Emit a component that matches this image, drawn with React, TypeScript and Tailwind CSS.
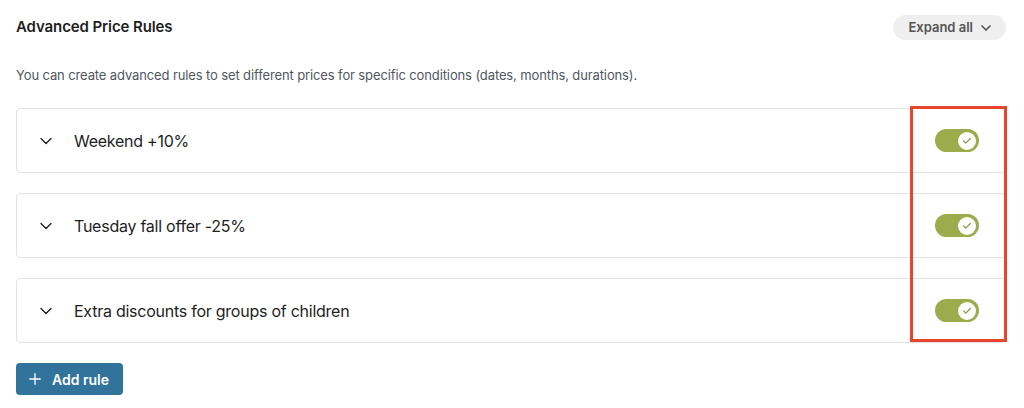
import { ChevronDown, Plus, Check } from "lucide-react";

const rules = [
  "Weekend +10%",
  "Tuesday fall offer -25%",
  "Extra discounts for groups of children",
];

function Toggle() {
  return (
    <div className="w-[44px] h-[23px] rounded-full bg-[#9cab4b] flex items-center justify-end pr-[3px]">
      <div className="w-[18px] h-[18px] rounded-full bg-white flex items-center justify-center">
        <Check size={10} strokeWidth={3} className="text-[#8a9a3c]" />
      </div>
    </div>
  );
}

export default function App() {
  return (
    <div className="w-[1024px] h-[408px] bg-white px-4 pt-[15px] font-['Inter',sans-serif] overflow-hidden">
      <div className="w-[990px]">
        {/* Header */}
        <div className="flex items-center justify-between h-[25px]">
          <h2 className="text-[15px] font-semibold text-[#1e1e1e] tracking-[-0.1px]">
            Advanced Price Rules
          </h2>
          <button className="h-[25px] pl-[15px] pr-[12px] rounded-full bg-[#efefef] text-[#555] text-[13px] font-semibold flex items-center gap-[5px]">
            Expand all
            <ChevronDown size={16} strokeWidth={2.5} />
          </button>
        </div>

        <p className="mt-[26px] text-[13px] text-[#50575e] leading-[18px] tracking-[-0.12px]">
          You can create advanced rules to set different prices for specific conditions (dates, months, durations).
        </p>

        {/* Rules */}
        <div className="relative mt-[24px] flex flex-col gap-[20px]">
          {rules.map((r) => (
            <div
              key={r}
              className="h-[65px] border border-[#e2e2e2] rounded-[4px] flex items-center pl-[19px] pr-[26px]"
            >
              <ChevronDown size={20} strokeWidth={1.6} className="text-[#1e1e1e]" />
              <span className="ml-[18px] text-[16px] text-[#1e1e1e] flex-1 tracking-[-0.25px]">{r}</span>
              <Toggle />
            </div>
          ))}
          <div className="absolute left-[894px] -top-[2px] w-[97px] h-[236px] border-[3px] border-[#e8452c]" />
        </div>

        <button className="mt-[20px] h-[32px] w-[107px] rounded-[4px] bg-[#31739a] text-white text-[14px] font-semibold flex items-center pl-[10px] gap-[8px]">
          <Plus size={18} strokeWidth={1.75} />
          Add rule
        </button>
      </div>
    </div>
  );
}
